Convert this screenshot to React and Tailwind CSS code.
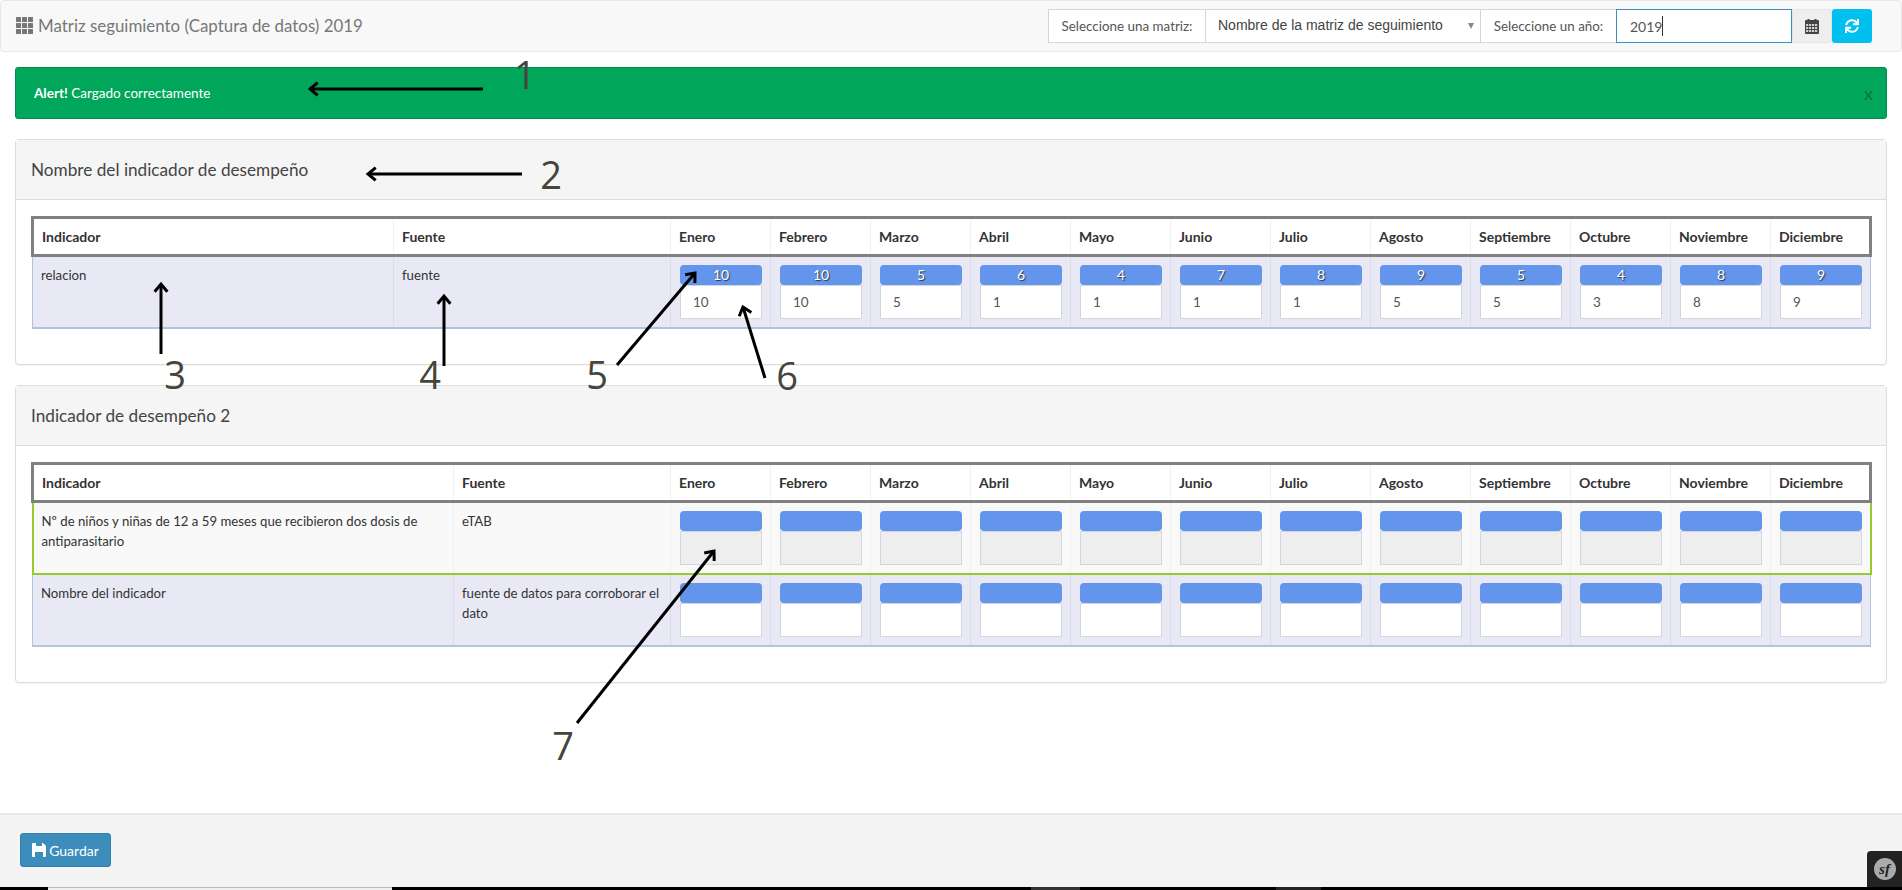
import React from 'react';
import { FaSync } from 'react-icons/fa';

const MONTHS = ['Enero', 'Febrero', 'Marzo', 'Abril', 'Mayo', 'Junio', 'Julio', 'Agosto', 'Septiembre', 'Octubre', 'Noviembre', 'Diciembre'];

const TABLE_ONE = [
  {
    name: 'relacion',
    source: 'fuente',
    tone: 'lavender',
    goals: [10, 10, 5, 6, 4, 7, 8, 9, 5, 4, 8, 9],
    values: [10, 10, 5, 1, 1, 1, 1, 5, 5, 3, 8, 9],
  },
];

const TABLE_TWO = [
  {
    name: 'Nº de niños y niñas de 12 a 59 meses que recibieron dos dosis de antiparasitario',
    source: 'eTAB',
    tone: 'green',
    disabled: true,
  },
  {
    name: 'Nombre del indicador',
    source: 'fuente de datos para corroborar el dato',
    tone: 'lavender',
  },
];

// flechas y numeros de la anotacion, encima de la captura
const ARROWS = [
  [483, 89, 310, 89],
  [522, 174, 368, 174],
  [161, 354, 161, 284],
  [444, 366, 444, 296],
  [617, 365, 695, 273],
  [765, 378, 743, 307],
  [577, 723, 714, 551],
];

function Arrow({ line }) {
  const [x1, y1, x2, y2] = line;
  const angle = Math.atan2(y2 - y1, x2 - x1);
  const wing = (offset) => `${x2 + 10 * Math.cos(angle + offset)},${y2 + 10 * Math.sin(angle + offset)}`;
  return (
    <g stroke="#000" strokeWidth="3" fill="none">
      <line x1={x1} y1={y1} x2={x2} y2={y2} />
      <polyline points={`${wing(Math.PI * 0.78)} ${x2},${y2} ${wing(-Math.PI * 0.78)}`} />
    </g>
  );
}

function Annotations() {
  const digit = "absolute w-8 -ml-4 text-center font-['Open_Sans',sans-serif] text-[38px] leading-[48px] text-[#45453a]";
  return (
    <div className="absolute inset-0 pointer-events-none">
      <svg className="absolute inset-0" width="1902" height="890">
        {ARROWS.map((line, i) => <Arrow key={i} line={line} />)}
      </svg>
      <span className={`${digit} left-[525px] top-[50px]`}>1</span>
      <span className={`${digit} left-[551px] top-[150px]`}>2</span>
      <span className={`${digit} left-[175px] top-[350px]`}>3</span>
      <span className={`${digit} left-[430px] top-[350px]`}>4</span>
      <span className={`${digit} left-[597px] top-[350px]`}>5</span>
      <span className={`${digit} left-[787px] top-[351px]`}>6</span>
      <span className={`${digit} left-[563px] top-[721px]`}>7</span>
    </div>
  );
}

function ThIcon() {
  return (
    <svg width="17" height="17" viewBox="0 0 17 17" fill="#777" className="shrink-0">
      {[0, 6, 12].map((x) => [0, 6, 12].map((y) => <rect key={`${x}-${y}`} x={x} y={y} width="5" height="5" rx="0.5" />))}
    </svg>
  );
}

function CalendarIcon() {
  return (
    <svg width="14" height="15" viewBox="0 0 14 15" className="shrink-0">
      <rect x="0" y="1" width="14" height="14" rx="1" fill="#444" />
      <rect x="2.5" y="0" width="2" height="3" fill="#444" />
      <rect x="9.5" y="0" width="2" height="3" fill="#444" />
      {[5, 8, 11].map((y) => [1, 4, 7, 10].map((x) => <rect key={`${x}-${y}`} x={x} y={y} width="2.2" height="2" fill="#cfcfcf" />))}
    </svg>
  );
}

function SaveIcon() {
  return (
    <svg width="14" height="14" viewBox="0 0 14 14" className="shrink-0">
      <path d="M0 1a1 1 0 0 1 1-1h10l3 3v10a1 1 0 0 1-1 1H1a1 1 0 0 1-1-1z" fill="#fff" />
      <path d="M4 0h6v3H4zM3 9h8v5H3z" fill="#3c8dbc" />
    </svg>
  );
}

function TopBar() {
  return (
    <nav className="flex items-center justify-between h-[52px] bg-[#f8f8f8] border border-[#e7e7e7] rounded-[4px] pl-[15px] pr-[29px]">
      <div className="flex items-center gap-[5px] text-[16.9px] text-[#777]">
        <ThIcon />
        <span>Matriz seguimiento (Captura de datos) 2019</span>
      </div>
      <div className="flex h-[34px] text-[13.4px] text-[#555]">
        <span className="flex items-center justify-center w-[158px] bg-white border border-[#d2d6de]">Seleccione una matriz:</span>
        <div className="flex items-center justify-between w-[275px] bg-white border-y border-r border-[#d2d6de] pl-[12px] pr-[6px] pb-[2px] font-['Liberation_Sans',sans-serif] text-[14px] text-[#444]">
          <span>Nombre de la matriz de seguimiento</span>
          <span className="w-0 h-0 mt-[2px] border-x-[3px] border-t-[6px] border-x-transparent border-t-[#888]"></span>
        </div>
        <span className="flex items-center justify-center w-[135px] bg-white border-y border-[#d2d6de]">Seleccione un año:</span>
        <div className="flex items-center w-[176px] bg-white border border-[#3c8dbc] pl-[13px] text-[14px]">
          2019<span className="w-px h-[20px] bg-[#333]"></span>
        </div>
        <span className="flex items-center justify-center w-[40px] bg-[#eee] border border-[#e4e4e4] rounded-r-[3px]">
          <CalendarIcon />
        </span>
        <button className="flex items-center justify-center w-[40px] bg-[#00c0ef] rounded-[3px]">
          <FaSync size={14} color="#fff" />
        </button>
      </div>
    </nav>
  );
}

function MonthCell({ goal, value, disabled, tone }) {
  const border = tone === 'green' ? 'border-[#f0f0f0]' : 'border-[#dcdce6]';
  return (
    <td className={`border-l ${border} pt-[8px] pb-[8px] pl-[9px] pr-[8px] align-top`}>
      <div className="h-[20px] bg-[#6495ed] rounded-[4px] text-center text-[14px] leading-[20px] text-white [text-shadow:1px_1px_1px_#333]">{goal}</div>
      <div className={`h-[34px] border border-[#d2d6de] pl-[12px] text-[13.5px] leading-[32px] text-[#555] ${disabled ? 'bg-[#eee]' : 'bg-white'}`}>{value}</div>
    </td>
  );
}

function Row({ row }) {
  const isGreen = row.tone === 'green';
  const rowClass = isGreen
    ? 'bg-[#f9f9f9] border-x-2 border-b-2 border-[#97ca2e]'
    : 'bg-[#e9e9f5] border-x border-b-2 border-[#b0c4de]';
  const divider = isGreen ? 'border-[#f0f0f0]' : 'border-[#dcdce6]';
  return (
    <tr className={rowClass}>
      <td className="px-2 py-2 align-top text-[13.2px] leading-[20px] text-[#333]">{row.name}</td>
      <td className={`border-l ${divider} px-2 py-2 align-top text-[13.2px] leading-[20px] text-[#333]`}>{row.source}</td>
      {MONTHS.map((m, i) => (
        <MonthCell
          key={m}
          goal={row.goals ? row.goals[i] : ''}
          value={row.values ? row.values[i] : ''}
          disabled={row.disabled}
          tone={row.tone}
        />
      ))}
    </tr>
  );
}

function IndicatorTable({ nameWidth, sourceWidth, rows }) {
  return (
    <table className="w-[1838px] table-fixed border-collapse">
      <colgroup>
        <col className={nameWidth} />
        <col className={sourceWidth} />
        {MONTHS.map((m) => <col key={m} className="w-[100px]" />)}
      </colgroup>
      <thead>
        <tr className="h-[38px] bg-white border-[3px] border-[#808080] text-left text-[14px] font-bold text-[#333]">
          <th className="px-2 font-bold">Indicador</th>
          <th className="border-l border-[#f0f0f0] px-2 font-bold">Fuente</th>
          {MONTHS.map((m) => <th key={m} className="border-l border-[#f0f0f0] pl-2 font-bold">{m}</th>)}
        </tr>
      </thead>
      <tbody>
        {rows.map((row) => <Row key={row.name} row={row} />)}
      </tbody>
    </table>
  );
}

function Panel({ title, children }) {
  return (
    <section className="border border-[#ddd] rounded-[4px] bg-white shadow-[0_1px_1px_rgba(0,0,0,0.05)]">
      <h3 className="flex items-center h-[60px] px-[15px] bg-[#f5f5f5] border-b border-[#ddd] text-[17.2px] text-[#444]">{title}</h3>
      <div className="pt-[16px] pb-[35px] pl-[15px]">{children}</div>
    </section>
  );
}

export default function App() {
  return (
    <div className="relative flex flex-col h-[890px] overflow-hidden bg-white font-['Lato',sans-serif]">
      <TopBar />

      <div className="flex flex-col gap-[20px] px-[15px] mt-[15px]">
        <div className="flex items-center justify-between h-[52px] bg-[#00a65a] border border-[#008d4c] rounded-[3px] pl-[18px] pr-[13px] text-[13.5px] text-white">
          <span><strong>Alert!</strong> Cargado correctamente</span>
          <span className="text-[18px] text-black/30">x</span>
        </div>

        <Panel title="Nombre del indicador de desempeño">
          <IndicatorTable nameWidth="w-[361px]" sourceWidth="w-[277px]" rows={TABLE_ONE} />
        </Panel>

        <Panel title="Indicador de desempeño 2">
          <IndicatorTable nameWidth="w-[421px]" sourceWidth="w-[217px]" rows={TABLE_TWO} />
        </Panel>
      </div>

      <footer className="flex items-center mt-auto h-[74px] bg-[#f4f4f4] border-t-2 border-[#e7e7e7] pl-[20px] pb-[2px]">
        <button className="flex items-center gap-[3px] h-[34px] w-[91px] justify-center bg-[#3c8dbc] border border-[#367fa9] rounded-[3px] text-[14px] text-white">
          <SaveIcon />
          Guardar
        </button>
      </footer>

      {/* la barra de tareas cortada al pie de la captura */}
      <div className="flex h-[3px] bg-black shrink-0">
        <div className="w-[48px]"></div>
        <div className="w-[344px] bg-[#f0f0f0] border-t border-[#bbb]"></div>
        <div className="w-[639px]"></div>
        <div className="w-[49px] bg-[#333]"></div>
        <div className="w-[196px]"></div>
        <div className="w-[45px] bg-[#222]"></div>
      </div>

      <div className="absolute right-0 bottom-[3px] flex items-center justify-center w-[35px] h-[36px] bg-[#222] rounded-tl-[4px]">
        <span className="flex items-center justify-center w-[22px] h-[22px] rounded-full bg-[#aaa] font-['Liberation_Serif',serif] italic text-[15px] font-bold leading-none text-[#222]">sf</span>
      </div>

      <Annotations />
    </div>
  );
}
